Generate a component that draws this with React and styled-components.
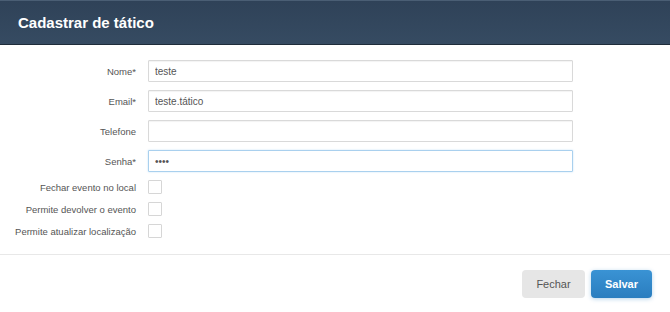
import React from "react";
import styled, { createGlobalStyle } from "styled-components";

const GlobalStyle = createGlobalStyle`
  body {
    margin: 0;
    background: #ffffff;
    font-family: "Liberation Sans", Arial, sans-serif;
  }
`;

const Modal = styled.div`
  width: 670px;
  height: 312px;
  background: #fff;
  display: flex;
  flex-direction: column;
`;

const Header = styled.div`
  height: 43px;
  display: flex;
  align-items: center;
  padding: 0 18px;
  background: linear-gradient(#2f4258, #364b62);
  border-top: 1px solid #4a5e74;
  border-bottom: 1px solid #1f2c3a;
`;

const Title = styled.h3`
  margin: 0;
  color: #fff;
  font-size: 15px;
  font-weight: bold;
`;

const Body = styled.div`
  display: grid;
  grid-template-columns: 136px 425px;
  column-gap: 12px;
  row-gap: 8px;
  padding-top: 15px;
  padding-bottom: 16px;
  border-bottom: 1px solid #e8e8e8;
`;

const Label = styled.label`
  justify-self: end;
  align-self: center;
  white-space: nowrap;
  font-size: 9.5px;
  color: #555;
`;

const Input = styled.input`
  box-sizing: border-box;
  width: 425px;
  height: 22px;
  padding: 0 6px;
  border: 1px solid ${(p) => (p.$focus ? "#a9d0ee" : "#d9d9d9")};
  box-shadow: ${(p) =>
    p.$focus ? "0 0 2px rgba(82,168,236,0.35)" : "inset 0 1px 1px rgba(0,0,0,0.05)"};
  border-radius: 1px;
  font-family: "Liberation Sans", Arial, sans-serif;
  font-size: 10px;
  color: #555;
  outline: none;
`;

const Check = styled.span`
  display: block;
  box-sizing: border-box;
  width: 14px;
  height: 14px;
  border: 1px solid #d6d6d6;
  border-radius: 1px;
  background: #fff;
`;

const Footer = styled.div`
  display: flex;
  justify-content: flex-end;
  gap: 6px;
  padding: 15px 18px 0 0;
`;

const Button = styled.button`
  height: 28px;
  width: ${(p) => (p.$primary ? "61px" : "63px")};
  padding: 0;
  border: none;
  border-radius: 4px;
  font-family: "Liberation Sans", Arial, sans-serif;
  font-size: 11px;
  font-weight: ${(p) => (p.$primary ? "bold" : "normal")};
  color: ${(p) => (p.$primary ? "#fff" : "#555")};
  background: ${(p) =>
    p.$primary ? "linear-gradient(#3a93d4, #2a7dbf)" : "#e6e6e6"};
  box-shadow: ${(p) =>
    p.$primary ? "0 1px 4px rgba(42,125,191,0.35)" : "none"};
`;

const fields = [
  { label: "Nome*", value: "teste" },
  { label: "Email*", value: "teste.tático" },
  { label: "Telefone", value: "" },
  { label: "Senha*", value: "••••", focus: true },
];

const checks = [
  "Fechar evento no local",
  "Permite devolver o evento",
  "Permite atualizar localização",
];

export default function App() {
  return (
    <Modal>
      <GlobalStyle />
      <Header>
        <Title>Cadastrar de tático</Title>
      </Header>
      <Body>
        {fields.map((f) => (
          <React.Fragment key={f.label}>
            <Label>{f.label}</Label>
            <Input $focus={f.focus} defaultValue={f.value} readOnly />
          </React.Fragment>
        ))}
        {checks.map((c) => (
          <React.Fragment key={c}>
            <Label>{c}</Label>
            <Check />
          </React.Fragment>
        ))}
      </Body>
      <Footer>
        <Button>Fechar</Button>
        <Button $primary>Salvar</Button>
      </Footer>
    </Modal>
  );
}
